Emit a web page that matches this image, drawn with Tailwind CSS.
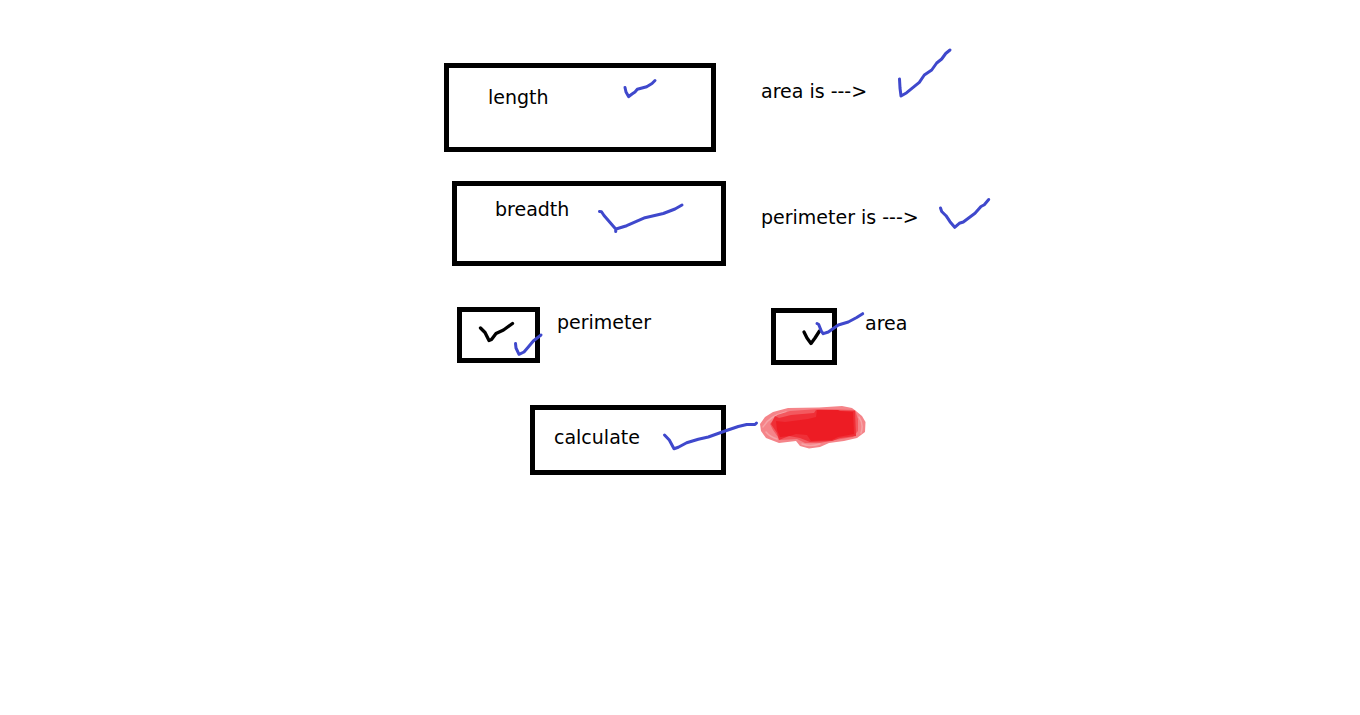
<!DOCTYPE html>
<html lang="en">
<head>
<meta charset="utf-8">
<meta name="viewport" content="width=device-width, initial-scale=1">
<title>Rectangle calculator</title>
<script src="https://cdn.jsdelivr.net/npm/@tailwindcss/browser@4"></script>
</head>
<body class="min-h-screen bg-white text-black">
<main class="relative ml-[444px] pt-[63px] font-['DejaVu_Sans',sans-serif] text-[19px] leading-[22px]">
  <form>
    <div class="flex items-start gap-[45px]">
      <input type="text" aria-label="length" placeholder="length" class="w-[272px] border-5 border-black pt-[18px] pr-4 pb-[39px] pl-[39px] placeholder:text-black placeholder:opacity-100">
      <output class="pt-[17px]">area is ---&gt;</output>
    </div>
    <div class="mt-[29px] flex items-start gap-[35px] pl-2">
      <input type="text" aria-label="breadth" placeholder="breadth" class="w-[274px] border-5 border-black pt-3 pr-4 pb-[41px] pl-[38px] placeholder:text-black placeholder:opacity-100">
      <output class="pt-[25px]">perimeter is ---&gt;</output>
    </div>
    <div class="mt-[41px] flex items-start pl-[13px]">
      <div class="flex w-[314px] items-start gap-[17px]">
        <input id="perimeter" type="checkbox" checked class="h-14 w-[83px] appearance-none border-5 border-black">
        <label for="perimeter" class="pt-1">perimeter</label>
      </div>
      <div class="flex items-start gap-7 pt-px">
        <input id="area" type="checkbox" checked class="h-[57px] w-[66px] appearance-none border-5 border-black">
        <label for="area" class="pt-1">area</label>
      </div>
    </div>
    <button type="button" class="mt-10 ml-[86px] block w-[196px] border-5 border-black pt-4 pb-[22px] pl-[19px] text-left">calculate</button>
  </form>

  <!-- Pen marks drawn over the form -->
  <svg class="pointer-events-none absolute top-0 left-0" width="560" height="490" viewBox="444 0 560 490" fill="none" stroke-linecap="round" stroke-linejoin="round" aria-hidden="true">
    <g stroke="#000" stroke-width="3.300">
      <path d="M480.500 328L485 332.500L489 340.500L491.500 339.500L496 333.500L503.500 330L512.500 323.500"/>
      <path d="M804 332L807 338L811 343.500L815 338L819.500 331"/>
    </g>
    <g stroke="#3f48cc" stroke-width="3">
      <path d="M625 87.500L626 92L628.700 96.700L632 94L635 92L637.300 89.300L646.700 86.700L652 83.500L655 80.500"/>
      <path d="M899.500 79L900 88L901 96L906.700 92.700L919.300 82.300L924.300 75L931.700 70L936.700 63L941.700 59L945.700 53.500L950 50"/>
      <path d="M599.500 211.500L601.500 211.700L604 215.500L615.700 229L615.700 231.500L616 229L626.700 225.700L645 217.700L663.300 213.500L675 209L682 205"/>
      <path d="M940.500 208L941.700 211.500L946 215.700L950 221.700L954.700 227.300L959.300 223.300L963.300 222L975 213.300L981 206.500L984.300 204.700L988.700 199.500"/>
      <path d="M515.500 343.500L516 348L519 354.300L524 352L528.300 347L533.300 341L541 335"/>
      <path d="M817 323.500L818.700 324.500L821.500 331.500L823.300 333.700L828.300 332L838.300 325L848.300 322L856.700 317.500L862.700 313.700"/>
      <path d="M664.500 435L669.300 440L674 448.700L678.300 447.300L686.700 442.700L698.300 439.300L708.300 437L725 431L738.300 426.500L746.700 424.500L755 424.500L756.500 423"/>
    </g>
    <path fill="#f58489" d="M760 424L765 417L773 412L788 408L819 407.500L842 406L852 408L856 411L862 416L865.500 422L865 432L857 438L844 441L829 443L820 447L809 448.500L800 446L796 441L779 443L766 438L761 431Z"/>
    <path stroke="#f7a3a6" stroke-width="1.500" d="M763 427Q769 416 786 412M859 417Q864 424 861 433M766 432Q770 437 777 439M802 444Q810 447 820 444"/>
    <path fill="#f3595f" d="M777 415L790 411L819 409L855 410L858 419L858 431L853 437L835 440L820 443L805 443L797 439L780 440L773 430L770 424Z"/>
    <path fill="#ef2f37" d="M771 424L775 416L779 418L791 415L814 413L816 410L855 411L856 436L840 438L832 441L810 442L800 438L789 436L779 440L777 433Z"/>
    <path fill="#ed1c24" d="M776 421L785 422L808 419L816 417L817 410L838 410L840 411L853 412L854 434L838 437L832 440L811 441L807 435L796 434L790 436L780 437L777 430Z"/>
  </svg>
</main>
</body>
</html>
